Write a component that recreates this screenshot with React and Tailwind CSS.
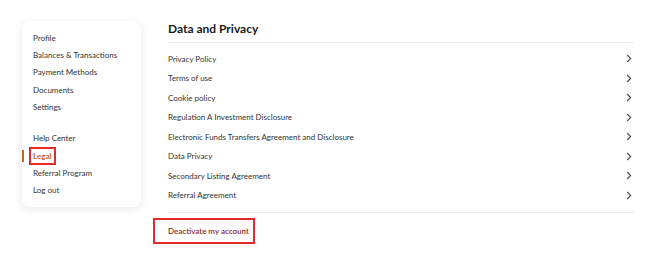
import React from "react";

const topLinks = ["Profile", "Balances & Transactions", "Payment Methods", "Documents", "Settings"];
const bottomLinks = ["Help Center", "Legal", "Referral Program", "Log out"];

const docs = [
  "Privacy Policy",
  "Terms of use",
  "Cookie policy",
  "Regulation A Investment Disclosure",
  "Electronic Funds Transfers Agreement and Disclosure",
  "Data Privacy",
  "Secondary Listing Agreement",
  "Referral Agreement",
];

const Chevron = () => (
  <svg width="6" height="9" viewBox="0 0 6 9" fill="none" className="mr-[2px]">
    <path d="M1.2 1 L4.6 4.5 L1.2 8" stroke="#555" strokeWidth="1.2" />
  </svg>
);

const NavItem = ({ label, active }) => (
  <div className="relative flex h-[17.4px] items-center pl-[11px]">
    {active && <span className="absolute left-0 top-[3px] h-[12px] w-[2px] bg-[#d4621f]" />}
    {active ? (
      <span className="-ml-[4px] border-2 border-[#e8282b] px-[2px] py-[1px] font-bold text-[#d4621f]">
        {label}
      </span>
    ) : (
      <span className="text-[#333]">{label}</span>
    )}
  </div>
);

export default function App() {
  return (
    <div
      className="flex h-[257px] w-[670px] bg-white text-[8px]"
      style={{ fontFamily: "Lato, sans-serif" }}
    >
      <div className="ml-[22px] mt-[21px] h-[186px] w-[119px] rounded-[8px] bg-white pt-[8px] shadow-[0_2px_10px_rgba(0,0,0,0.09)]">
        {topLinks.map((l) => (
          <NavItem key={l} label={l} />
        ))}
        <div className="h-[13.5px]" />
        {bottomLinks.map((l) => (
          <NavItem key={l} label={l} active={l === "Legal"} />
        ))}
      </div>

      <div className="ml-[27px] mt-[20px] w-[466px]">
        <h2 className="pb-[4px] text-[12px] font-bold text-[#1a1a1a]">Data and Privacy</h2>
        <div className="h-px bg-[#ececec]" />
        <div className="pt-[6px] pb-[7px]">
          {docs.map((d) => (
            <div key={d} className="flex h-[19.5px] items-center justify-between text-[#333]">
              <span>{d}</span>
              <Chevron />
            </div>
          ))}
        </div>
        <div className="h-px bg-[#ececec]" />
        <div className="-ml-[15px] mt-[5px] flex h-[26px] w-[102px] items-center border-2 border-[#e8282b] pl-[13px] font-semibold text-[#8c2b2b]">
          Deactivate my account
        </div>
      </div>
    </div>
  );
}
